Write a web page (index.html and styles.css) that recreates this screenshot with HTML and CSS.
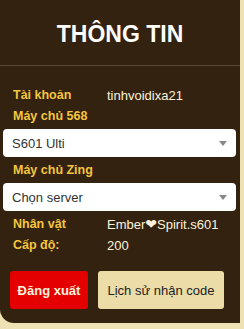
FILE: index.html
```html
<!DOCTYPE html>
<html lang="vi">
<head>
<meta charset="utf-8">
<title>Thông tin</title>
<link rel="stylesheet" href="styles.css">
</head>
<body>
<div class="panel">
  <div class="header"><h1 class="title">THÔNG TIN</h1></div>
  <div class="body">
    <div class="row"><span class="label">Tài khoản</span><span class="value">tinhvoidixa21</span></div>
    <div class="row"><span class="label">Máy chủ 568</span></div>
    <div class="select"><span>S601 Ulti</span><span class="arrow"></span></div>
    <div class="row"><span class="label">Máy chủ Zing</span></div>
    <div class="select"><span>Chọn server</span><span class="arrow"></span></div>
    <div class="row"><span class="label">Nhân vật</span><span class="value">Ember<span class="heart">❤</span>Spirit.s601</span></div>
    <div class="row"><span class="label">Cấp độ:</span><span class="value">200</span></div>
    <div class="actions">
      <button class="btn btn-logout">Đăng xuất</button>
      <button class="btn btn-history">Lịch sử nhận code</button>
    </div>
  </div>
</div>
</body>
</html>
```
FILE: styles.css
```css
html, body {
  margin: 0;
  padding: 0;
}
body {
  background: #eee1b3;
  font-family: "Liberation Sans", Arial, sans-serif;
  width: 244px;
  height: 329px;
  overflow: hidden;
}
.panel {
  width: 240px;
  height: 323px;
  background: #32220f;
  border-radius: 0 0 0 14px;
  box-sizing: border-box;
}
.header {
  height: 66px;
  border-bottom: 1px solid #5b4630;
  display: flex;
  align-items: center;
  justify-content: center;
  box-sizing: border-box;
}
.title {
  margin: 4px 0 0 0;
  font-family: "Liberation Sans", Arial, sans-serif;
  font-size: 23px;
  font-weight: bold;
  color: #ffffff;
}
.body {
  padding: 19px 4px 0 3px;
}
.row {
  display: grid;
  grid-template-columns: 94px 1fr;
  padding-left: 10px;
  height: 20px;
  align-items: center;
  font-size: 13px;
  margin-bottom: 1px;
}
.label {
  color: #f6c53e;
  font-weight: bold;
  font-size: 12.5px;
  white-space: nowrap;
}
.value {
  color: #fdf3dc;
  white-space: nowrap;
}
.heart {
  color: #fdf3dc;
  font-family: "DejaVu Sans", sans-serif;
  font-size: 14px;
  line-height: 1;
}
.select {
  height: 28px;
  background: #ffffff;
  border-radius: 4px;
  display: flex;
  align-items: center;
  justify-content: space-between;
  padding: 0 9px 0 9px;
  font-size: 13px;
  color: #333333;
  margin: 3px 0 3px 0;
  box-sizing: border-box;
}
.arrow {
  width: 0;
  height: 0;
  border-left: 4px solid transparent;
  border-right: 4px solid transparent;
  border-top: 5px solid #888888;
}
.actions {
  display: flex;
  gap: 10px;
  padding: 15px 0 0 7px;
}
.btn {
  height: 38px;
  border: none;
  border-radius: 3px;
  font-family: "Liberation Sans", Arial, sans-serif;
  font-size: 13px;
  padding: 0;
  white-space: nowrap;
  cursor: pointer;
}
.btn-logout {
  width: 78px;
  background: #e40000;
  color: #fff3dc;
  font-weight: bold;
}
.btn-history {
  width: 126px;
  background: #ebdca8;
  color: #222222;
}
```
